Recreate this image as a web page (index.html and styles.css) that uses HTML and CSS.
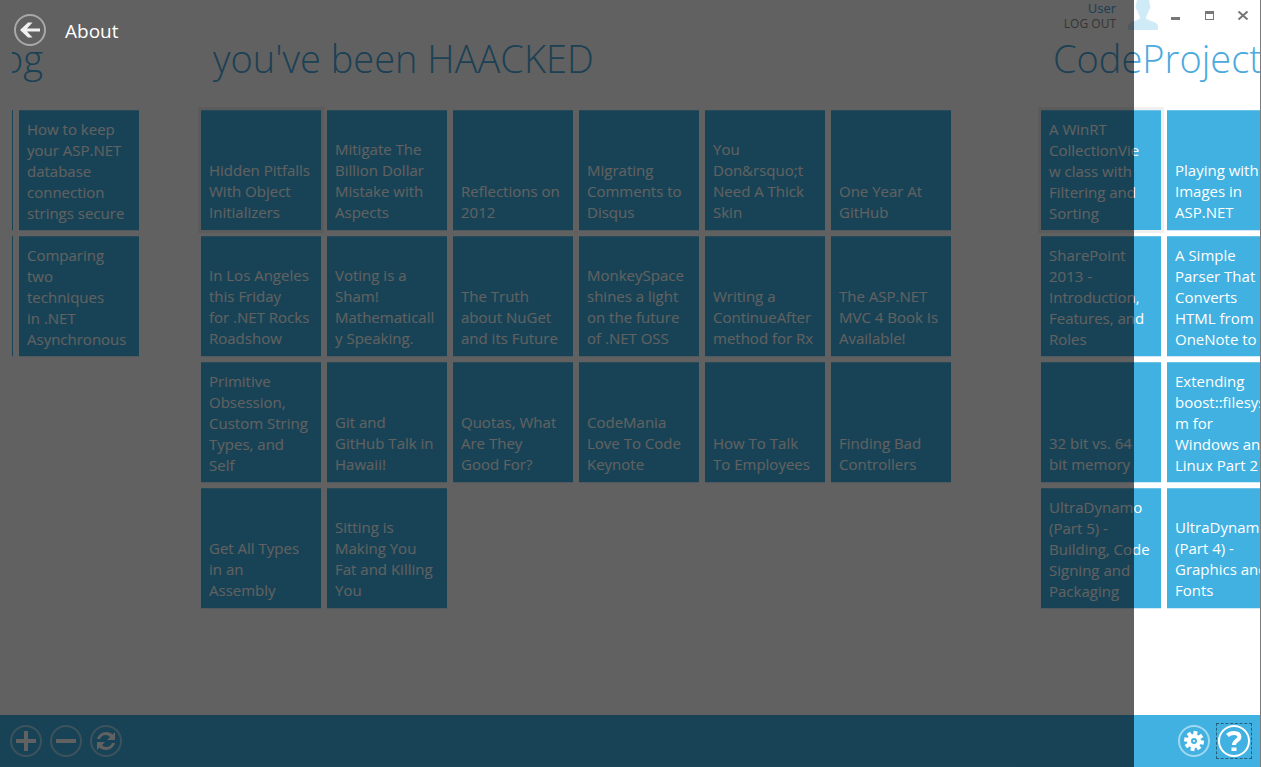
FILE: index.html
```html
<!DOCTYPE html>
<html lang="en">
<head>
<meta charset="utf-8">
<title>About</title>
<link rel="stylesheet" href="styles.css">
</head>
<body>
<div class="window">
  <header class="titlebar">
    <div class="account">
      <span class="user">User</span>
      <button class="logout" type="button">LOG OUT</button>
    </div>
    <svg class="avatar" viewBox="0 0 30 30" aria-hidden="true"><path d="M9 0h12l1 5c1 2 0 4-1 5-1 4-3 6-3 8 1 3 11 3 12 8v4H0v-4c1-5 11-5 12-8 0-2-2-4-3-8-1-1-2-3-1-5z"/></svg>
    <div class="controls">
      <button type="button" aria-label="Minimize"><svg viewBox="0 0 12 12"><path d="M2 7h9v3H2z"/></svg></button>
      <button type="button" aria-label="Maximize"><svg viewBox="0 0 12 12"><path fill-rule="evenodd" d="M2 1h9v9H2zM3 4v5h7V4z"/></svg></button>
      <button type="button" aria-label="Close"><svg viewBox="0 0 12 12"><path class="line" d="M1.500 1.500l9 8M10.500 1.500l-9 8"/></svg></button>
    </div>
  </header>

  <main class="hub">
    <section class="group group-first">
      <h2>Blog</h2>
      <div class="tiles two">
        <a href="#" class="tile" aria-label="Previous"></a>
        <a href="#" class="tile"><span>How to keep<br>your ASP.NET<br>database<br>connection<br>strings secure</span></a>
        <a href="#" class="tile" aria-label="Previous"></a>
        <a href="#" class="tile"><span>Comparing<br>two<br>techniques<br>in .NET<br>Asynchronous</span></a>
      </div>
    </section>
    <section class="group">
      <h2>you've been HAACKED</h2>
      <div class="tiles six">
        <a href="#" class="tile selected"><span>Hidden Pitfalls<br>With Object<br>Initializers</span></a>
        <a href="#" class="tile"><span>Mitigate The<br>Billion Dollar<br>Mistake with<br>Aspects</span></a>
        <a href="#" class="tile"><span>Reflections on<br>2012</span></a>
        <a href="#" class="tile"><span>Migrating<br>Comments to<br>Disqus</span></a>
        <a href="#" class="tile"><span>You<br>Don&amp;rsquo;t<br>Need A Thick<br>Skin</span></a>
        <a href="#" class="tile"><span>One Year At<br>GitHub</span></a>
        <a href="#" class="tile"><span>In Los Angeles<br>this Friday<br>for .NET Rocks<br>Roadshow</span></a>
        <a href="#" class="tile"><span>Voting is a<br>Sham!<br>Mathematicall<br>y Speaking.</span></a>
        <a href="#" class="tile"><span>The Truth<br>about NuGet<br>and its Future</span></a>
        <a href="#" class="tile"><span>MonkeySpace<br>shines a light<br>on the future<br>of .NET OSS</span></a>
        <a href="#" class="tile"><span>Writing a<br>ContinueAfter<br>method for Rx</span></a>
        <a href="#" class="tile"><span>The ASP.NET<br>MVC 4 Book Is<br>Available!</span></a>
        <a href="#" class="tile"><span>Primitive<br>Obsession,<br>Custom String<br>Types, and<br>Self</span></a>
        <a href="#" class="tile"><span>Git and<br>GitHub Talk in<br>Hawaii!</span></a>
        <a href="#" class="tile"><span>Quotas, What<br>Are They<br>Good For?</span></a>
        <a href="#" class="tile"><span>CodeMania<br>Love To Code<br>Keynote</span></a>
        <a href="#" class="tile"><span>How To Talk<br>To Employees</span></a>
        <a href="#" class="tile"><span>Finding Bad<br>Controllers</span></a>
        <a href="#" class="tile"><span>Get All Types<br>in an<br>Assembly</span></a>
        <a href="#" class="tile"><span>Sitting is<br>Making You<br>Fat and Killing<br>You</span></a>
      </div>
    </section>
    <section class="group">
      <h2>CodeProject</h2>
      <div class="tiles two">
        <a href="#" class="tile selected"><span>A WinRT<br>CollectionVie<br>w class with<br>Filtering and<br>Sorting</span></a>
        <a href="#" class="tile"><span>Playing with<br>Images in<br>ASP.NET</span></a>
        <a href="#" class="tile"><span>SharePoint<br>2013 -<br>Introduction,<br>Features, and<br>Roles</span></a>
        <a href="#" class="tile"><span>A Simple<br>Parser That<br>Converts<br>HTML from<br>OneNote to</span></a>
        <a href="#" class="tile"><span>32 bit vs. 64<br>bit memory</span></a>
        <a href="#" class="tile"><span>Extending<br>boost::filesyste<br>m for<br>Windows and<br>Linux Part 2</span></a>
        <a href="#" class="tile"><span>UltraDynamo<br>(Part 5) -<br>Building, Code<br>Signing and<br>Packaging</span></a>
        <a href="#" class="tile"><span>UltraDynamo<br>(Part 4) -<br>Graphics and<br>Fonts</span></a>
      </div>
    </section>
  </main>

  <footer class="appbar">
    <button class="round" type="button" aria-label="Add"><svg viewBox="0 0 32 32"><circle class="ring" cx="16" cy="16" r="15"/><path d="M14 6h4v8h8v4h-8v8h-4v-8H6v-4h8z"/></svg></button>
    <button class="round" type="button" aria-label="Remove"><svg viewBox="0 0 32 32"><circle class="ring" cx="16" cy="16" r="15"/><path d="M6 14h20v4H6z"/></svg></button>
    <button class="round" type="button" aria-label="Refresh"><svg viewBox="0 0 32 32"><circle class="ring" cx="16" cy="16" r="15"/><path d="M7 14c1-4 5-7 9-7 3 0 5 1 6.500 2.500L25 7v8h-8l3-3c-1-1-2-2-4-2-3 0-5 1.500-6 4zM25 18c-1 4-5 7-9 7-3 0-5-1-6.500-2.500L7 25v-8h8l-3 3c1 1 2 2 4 2 3 0 5-1.500 6-4z"/></svg></button>
    <span class="spacer"></span>
    <button class="round" type="button" aria-label="Settings"><svg viewBox="0 0 32 32"><circle class="ring" cx="16" cy="16" r="15"/><circle cx="16" cy="16" r="7"/><path class="teeth" d="M25.800 17.700L6.200 14.300M14.300 25.800L17.700 6.200M21.700 24.200L10.300 7.800M7.800 21.700L24.200 10.300"/><circle class="hub-hole" cx="16" cy="16" r="2"/></svg></button>
    <button class="round focused" type="button" aria-label="Help"><svg viewBox="0 0 32 32"><circle class="ring" cx="16" cy="16" r="15"/><path class="hook" d="M9.500 10.500C11.500 8.500 13.500 8 16 8c3.500 0 5.500 1.500 5.500 4 0 3.500-5.500 3.500-5.500 8"/><path d="M13.500 22.500h5V26h-5z"/></svg></button>
  </footer>

  <aside class="flyout">
    <button class="round back" type="button" aria-label="Back"><svg viewBox="0 0 32 32"><circle class="ring" cx="16" cy="16" r="15"/><path d="M6 16l8-7.500h4.500L13 14.500H26v3H13l5.500 6H14z"/></svg></button>
    <h1>About</h1>
  </aside>
</div>
</body>
</html>
```
FILE: styles.css
```css
* { box-sizing: border-box; }

body {
  margin: 0;
  font-family: "Open Sans", "Noto Sans", sans-serif;
  background: #fff;
}

button {
  border: 0;
  padding: 0;
  background: none;
  font: inherit;
  color: inherit;
}

h1, h2 { margin: 0; }

.window {
  position: relative;
  display: flex;
  flex-direction: column;
  height: 100vh;
  overflow: hidden;
  border-right: 1px solid #7b7b7b;
}

.titlebar {
  display: flex;
  justify-content: flex-end;
  height: 32px;
}

.account {
  display: flex;
  flex-direction: column;
  align-items: flex-end;
  margin-right: 12px;
  font-size: 12px;
  line-height: 16px;
}

.user { font-size: 13px; color: #41a5dc; }
.logout { color: #8c8c8c; }

.avatar {
  width: 30px;
  height: 30px;
  fill: #d0ebf8;
}

.controls {
  display: flex;
  height: 32px;
}

.controls button {
  width: 34px;
  height: 32px;
}

.controls svg { width: 12px; height: 12px; fill: #777; }
.controls .line { fill: none; stroke: #777; stroke-width: 2; }

.hub {
  flex: 1;
  display: flex;
  margin-left: 12px;
  overflow: hidden;
}

.group { flex: none; margin-right: 90px; }
.group-first { margin-left: -119px; margin-right: 62px; }
.group-first h2 { padding-right: 96px; text-align: right; }

h2 {
  height: 78px;
  padding-left: 12px;
  font-size: 38px;
  line-height: 52px;
  font-weight: 300;
  color: #4ba9de;
  white-space: nowrap;
}

.tiles { display: grid; gap: 6px; }
.two { grid-template-columns: repeat(2, 120px); }
.six { grid-template-columns: repeat(6, 120px); }

.tile {
  display: flex;
  align-items: flex-end;
  height: 120px;
  padding: 8px 8px 7px;
  background: #41b1e1;
  box-shadow: inset 0 1px #6cc3e8, 0 1px #d0ebf7;
  color: #fff;
  font-size: 15px;
  line-height: 21px;
  text-decoration: none;
  white-space: nowrap;
}

.tile span { max-height: 104px; overflow: hidden; }
.selected { outline: 3px solid #f0f0f0; }

.appbar {
  display: flex;
  align-items: center;
  gap: 8px;
  height: 52px;
  padding: 0 10px;
  background: #41b1e1;
}

.spacer { flex: 1; }

.round { width: 32px; height: 32px; color: #fff; }
.round svg { display: block; width: 32px; height: 32px; fill: currentColor; }
.round .ring { fill: none; stroke: currentColor; stroke-width: 2; opacity: 0.5; }
.teeth { stroke: currentColor; stroke-width: 4; }
.hub-hole { fill: #fff; stroke: #41b1e1; stroke-width: 2; }
.hook { fill: none; stroke: currentColor; stroke-width: 4; }
.focused { outline: 1px dashed #23617b; outline-offset: 1px; }
.focused .ring { opacity: 1; }
.round.focused .ring { opacity: 1; }

.flyout {
  position: absolute;
  inset: 0 126px 0 0;
  display: flex;
  align-items: flex-start;
  gap: 19px;
  padding: 14px;
  background: rgba(0, 0, 0, 0.62);
  color: #fff;
}

.back { color: #f0f0f0; }

.flyout h1 {
  font-size: 19px;
  line-height: 34px;
  font-weight: 400;
}
```
